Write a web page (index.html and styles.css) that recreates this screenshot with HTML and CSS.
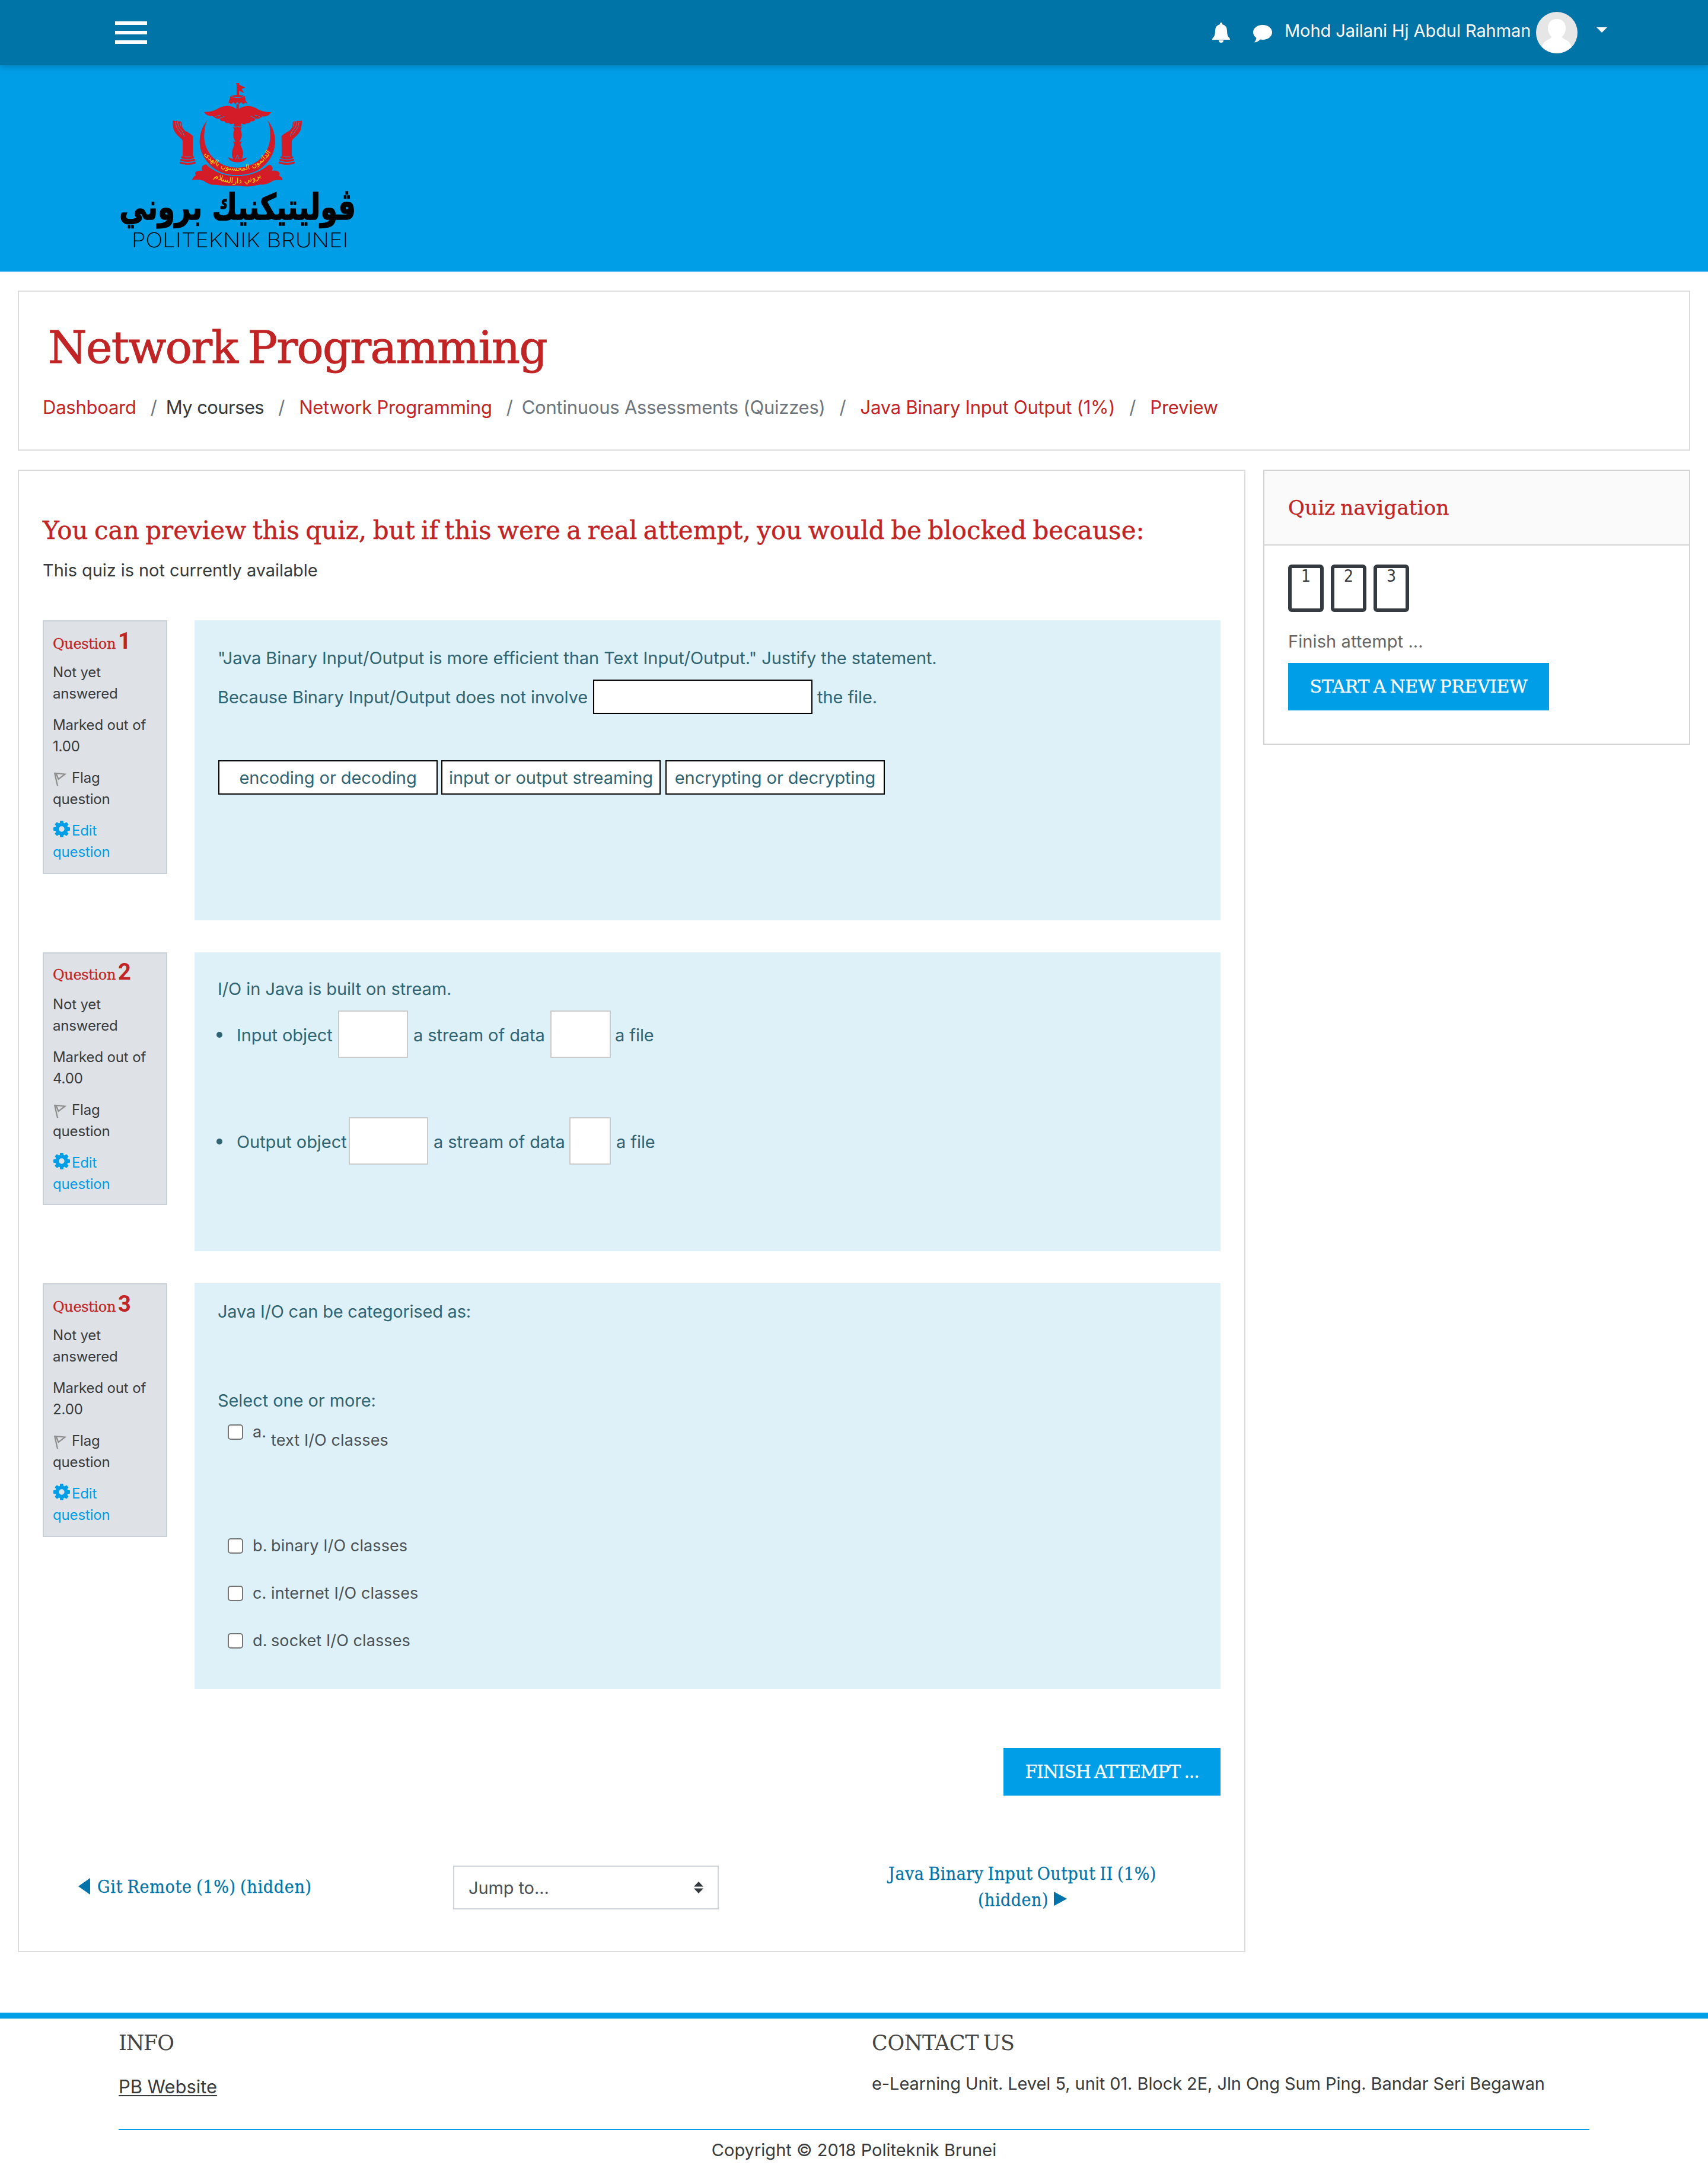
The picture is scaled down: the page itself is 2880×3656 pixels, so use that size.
FILE: index.html
```
<!DOCTYPE html>
<html lang="en">
<head>
<meta charset="utf-8">
<title>Java Binary Input Output (1%)</title>
<link rel="stylesheet" href="styles.css">
</head>
<body>
<svg class="defs" width="0" height="0" aria-hidden="true">
  <symbol id="flag" viewBox="0 0 24 26"><path d="M3 2l5 22M5.500 3l15 1.500-11 8.500z" fill="none" stroke="#8c8c8c" stroke-width="2.200"/></symbol>
  <symbol id="gear" viewBox="0 0 1536 1536"><path fill="#009ee7" d="M1024 768q0-106-75-181t-181-75-181 75-75 181 75 181 181 75 181-75 75-181zm512-109v222q0 12-8 23t-20 13l-185 28q-19 54-39 91 35 50 107 138 10 12 10 25t-9 23q-27 37-99 108t-94 71q-12 0-26-9l-138-108q-44 23-91 38-16 136-29 186-7 28-36 28h-222q-14 0-24.500-8.500t-11.500-21.500l-28-184q-49-16-90-37l-141 107q-10 9-25 9-14 0-25-11-126-114-165-168-7-10-7-23 0-12 8-23 15-21 51-66.500t54-70.500q-27-50-41-99l-183-27q-13-2-21-12.500t-8-23.500v-222q0-12 8-23t19-13l186-28q14-46 39-92-40-57-107-138-10-12-10-24 0-10 9-23 26-36 98.500-107.500t94.500-71.500q13 0 26 10l138 107q44-23 91-38 16-136 29-186 7-28 36-28h222q14 0 24.500 8.500t11.500 21.500l28 184q49 16 90 37l142-107q9-9 24-9 13 0 25 10 129 119 165 170 7 8 7 22 0 12-8 23-15 21-51 66.500t-54 70.500q26 50 41 98l183 28q13 2 21 12.500t8 23.500z"/></symbol>
  <symbol id="hand" viewBox="385 600 130 240">
    <path d="M393 612q4-4 9 0l9 0q5-4 9 2l6 0q6-4 9 2l4 4q0 14 3 24l14 18q26 12 40 26l-1 104h-51v-78q0-8-10-14-30-26-36-46-5-20-5-42z" fill="#d31c27"/>
    <path d="M407 616l6 28 26 38M418 616l6 26 20 24 8 24M431 616l4 24" fill="none" stroke="#58a" stroke-width="3"/>
    <path d="M441 796q28 10 56 0M437 809q32 10 65 0M434 823q36 12 71 0" fill="none" stroke="#d31c27" stroke-width="10" stroke-linecap="round"/>
  </symbol>
</svg>

<header class="topbar">
  <button class="menu" aria-label="Side panel"><i></i><i></i><i></i></button>
  <div class="user">
    <svg class="bell" viewBox="0 0 30 34"><path fill="#fff" d="M15 0q2 0 2 3 8 2 8 11 0 9 4 12 1 1 1 3H0q0-2 1-3 4-3 4-12 0-9 8-11 0-3 2-3zM11 30h8q0 4-4 4t-4-4z"/></svg>
    <svg class="chat" viewBox="0 0 32 30"><path fill="#fff" d="M16 0c9 0 16 5.500 16 12.500S25 25 16 25q-2 0-4-.4Q8 29 2 29.500q3-3 3.500-7.500Q0 18 0 12.500C0 5.500 7 0 16 0z"/></svg>
    <span class="user-name">Mohd Jailani Hj Abdul Rahman</span>
    <svg class="avatar" viewBox="0 0 70 70"><defs><clipPath id="round"><circle cx="35" cy="35" r="35"/></clipPath></defs><g clip-path="url(#round)"><path fill="#e6e6e6" d="M0 0h70v70H0z"/><path fill="#fff" d="M35 12c9 0 15 6 15 15 0 7-3 12-6 15 0 5 14 4 16 18v12H10V60c2-14 16-13 16-18-3-3-6-8-6-15 0-9 6-15 15-15z"/></g></svg>
    <svg class="caret" viewBox="0 0 18 9"><path fill="#fff" d="M0 0h18L9 9z"/></svg>
  </div>
</header>

<div class="banner">
  <svg class="logo" viewBox="120 414 1206 852" role="img" aria-label="Politeknik Brunei">
    <g fill="#d31c27">
      <path d="M716 420h14v9l32 14-20 7 13 21-26-12v28h-12v-60h-3z"/>
      <path d="M686 486q36-12 72 0l5 24 9 16-12-6-10 8-11-11-10 10-9-11-10 11-10-10-11 11-9-9-6 6z"/>
      <path d="M716 527h12v24q38-26 84-6 34 24 80 22-14 26-46 22-8 14-34 12-4 16-22 12-6 12-26 12-4 8-22 0l-4 9q14 2-4 8-12-8-24 0-16-6-4-8l-4-9q-18 6-22-2-20 2-26-10-20 2-24-12-24 0-32-13-32 2-46-22 46 2 80-22 46-20 84 7z"/>
      <path d="M696 642q14 6 25-2 11 8 25 2-10 8-8 16 10 28 0 46-4 8-8 12l16 0q-12 8-8 20 16 34 10 52-2 14-10 18l32-10q-14 26-49 25-35 1-49-25l32 10q-8-4-10-18-4-20 10-52 4-12-8-20l16 0q-4-4-8-12-8-18 0-46 2-8-8-16z"/>
      <path d="M569 608A191 175 0 1 0 871 606Q888 636 886 676A167 158 0 1 1 554 670Q554 636 569 608z"/>
      <path d="M491 912q6-20 20-24-12-20 14-24 10-2 18 0-8-22 10-30 16-6 24 2 58 54 144 54t146-52q24-12 32 12 0 8-4 14 28-6 38 10 4 8-2 16 18 4 18 22-22-6-48 2-32 22-66 20-56 16-114 5-56 4-110-4-28 4-60-20-34-12-60-3z"/>
    </g>
    <g fill="none" stroke="#009ee7" stroke-width="3">
      <path d="M595 600q20-16 40-18M622 608q14-14 34-20M848 600q-20-16-40-18M822 608q-14-14-34-20M690 488q32 12 64 0M712 806l9-22 9 22"/>
      <path d="M566 832q60 56 154 56 92 0 160-58" stroke-width="5"/>
    </g>
    <use href="#hand" x="385" y="600" width="130" height="240"/>
    <use href="#hand" x="385" y="600" width="130" height="240" transform="matrix(-1 0 0 1 1440 0)"/>
    <path id="arc-upper" d="M520 720Q580 862 722 864 862 862 922 710" fill="none"/>
    <path id="arc-lower" d="M524 850Q620 928 722 928 822 928 916 842" fill="none"/>
    <g class="motto">
      <text class="motto-upper"><textPath href="#arc-upper" startOffset="50%">الدائمون المحسنون بالهدى</textPath></text>
      <text><textPath href="#arc-lower" startOffset="50%">بروني دارالسلام</textPath></text>
    </g>
    <text class="logo-jawi" x="722" y="1110" textLength="1196" lengthAdjust="spacingAndGlyphs">ڤوليتيكنيك بروني</text>
    <text class="logo-latin" x="186" y="1252" textLength="1096" lengthAdjust="spacingAndGlyphs">POLITEKNIK BRUNEI</text>
  </svg>
</div>

<section class="page-header">
  <h1>Network Programming</h1>
  <nav class="crumbs">
    <a>Dashboard</a><i>/</i><span class="dark tight">My courses</span><i class="wide">/</i><a>Network Programming</a><i>/</i><span>Continuous Assessments (Quizzes)</span><i class="wide">/</i><a>Java Binary Input Output (1%)</a><i class="wide">/</i><a>Preview</a>
  </nav>
</section>

<div class="columns">
  <main class="card main">
    <h3 class="notice">You can preview this quiz, but if this were a real attempt, you would be blocked because:</h3>
    <p class="reason">This quiz is not currently available</p>

    <section class="question q1">
      <aside class="info">
        <h4><span>Question</span><b>1</b></h4>
        <p>Not yet<br>answered</p>
        <p>Marked out of<br>1.00</p>
        <p><svg class="ico flag"><use href="#flag"/></svg>Flag<br>question</p>
        <p class="edit"><svg class="ico gear"><use href="#gear"/></svg>Edit<br>question</p>
      </aside>
      <div class="content">
        <p>"Java Binary Input/Output is more efficient than Text Input/Output." Justify the statement.</p>
        <div class="drop-line"><span class="lead">Because Binary Input/Output does not involve</span><span class="slot"></span><span>the file.</span></div>
        <div class="choices"><span class="slot">encoding or decoding</span><span class="slot">input or output streaming</span><span class="slot last">encrypting or decrypting</span></div>
      </div>
    </section>

    <section class="question q2">
      <aside class="info">
        <h4><span>Question</span><b>2</b></h4>
        <p>Not yet<br>answered</p>
        <p>Marked out of<br>4.00</p>
        <p><svg class="ico flag"><use href="#flag"/></svg>Flag<br>question</p>
        <p class="edit"><svg class="ico gear"><use href="#gear"/></svg>Edit<br>question</p>
      </aside>
      <div class="content">
        <p>I/O in Java is built on stream.</p>
        <ul>
          <li><span class="obj">Input object</span><span class="blank b1"></span><span class="mid">a stream of data</span><span class="blank b2"></span><span>a file</span></li>
          <li><span class="obj out">Output object</span><span class="blank b3"></span><span class="mid short">a stream of data</span><span class="blank b4"></span><span>a file</span></li>
        </ul>
      </div>
    </section>

    <section class="question q3">
      <aside class="info">
        <h4><span>Question</span><b>3</b></h4>
        <p>Not yet<br>answered</p>
        <p>Marked out of<br>2.00</p>
        <p><svg class="ico flag"><use href="#flag"/></svg>Flag<br>question</p>
        <p class="edit"><svg class="ico gear"><use href="#gear"/></svg>Edit<br>question</p>
      </aside>
      <div class="content">
        <p class="stem">Java I/O can be categorised as:</p>
        <p class="prompt">Select one or more:</p>
        <div class="option first"><span class="check"></span><span class="letter">a.</span><span class="answer">text I/O classes</span></div>
        <div class="option"><span class="check"></span><span class="letter">b.</span><span>binary I/O classes</span></div>
        <div class="option"><span class="check"></span><span class="letter">c.</span><span>internet I/O classes</span></div>
        <div class="option"><span class="check"></span><span class="letter">d.</span><span>socket I/O classes</span></div>
      </div>
    </section>

    <div class="submit"><button class="btn finish">FINISH ATTEMPT ...</button></div>

    <nav class="activity-nav">
      <a class="prev"><svg viewBox="0 0 20 28"><path d="M20 0v28L0 14z"/></svg>Git Remote (1%) (hidden)</a>
      <div class="jump">Jump to...<svg viewBox="0 0 16 20"><path d="M8 0l8 8.500H0zM8 20l8-8.500H0z"/></svg></div>
      <a class="next">Java Binary Input Output II (1%)<br>(hidden)<svg viewBox="0 0 22 24"><path d="M0 0v24l22-12z"/></svg></a>
    </nav>
  </main>

  <aside class="card side">
    <h5>Quiz navigation</h5>
    <div class="side-body">
      <div class="numbers"><span>1</span><span>2</span><span>3</span></div>
      <p>Finish attempt ...</p>
      <button class="btn restart">START A NEW PREVIEW</button>
    </div>
  </aside>
</div>

<footer>
  <div class="foot-cols">
    <div><h6>INFO</h6><a class="site">PB Website</a></div>
    <div><h6 class="contact">CONTACT US</h6><p>e-Learning Unit. Level 5, unit 01. Block 2E, Jln Ong Sum Ping. Bandar Seri Begawan</p></div>
  </div>
  <p class="copy">Copyright © 2018 Politeknik Brunei</p>
</footer>
</body>
</html>
```
FILE: styles.css
```
* { box-sizing: border-box; }
body { margin: 0; width: 2880px; height: 3656px; overflow: hidden; background: #fff; color: #373a3c; font: 29px/44px Inter, sans-serif; letter-spacing: -0.07px; }
h1, h3, h4, h5, h6, p, ul { margin: 0; padding: 0; font-weight: 400; }
button { border: 0; padding: 0; background: none; font: inherit; }
i { font-style: normal; }
.defs { display: block; height: 0; }

.topbar { position: relative; display: flex; justify-content: space-between; height: 110px; padding: 0 170px 0 194px; background: #0073a7; box-shadow: 0 2px 10px rgba(0, 60, 90, .35); }
.menu { display: flex; flex-direction: column; gap: 10px; margin-top: 36px; }
.menu i { width: 54px; height: 6px; background: #fff; }
.user { display: flex; align-items: center; color: #fff; }
.bell { width: 30px; height: 34px; }
.chat { width: 32px; height: 30px; margin: 4px 21px 0 39px; }
.user-name { width: 424px; padding-bottom: 7px; letter-spacing: -0.08px; white-space: nowrap; }
.avatar { width: 70px; height: 70px; margin-right: 32px; }
.caret { width: 18px; height: 9px; margin-bottom: 9px; }

.banner { height: 348px; padding: 28px 200px; background: #009ee7; }
.logo { display: block; width: 402px; height: 284px; overflow: visible; }
.motto { fill: #ffd400; font: 38px "DejaVu Sans", sans-serif; text-anchor: middle; letter-spacing: 0; }
.motto-upper { font-size: 36px; }
.logo-jawi { font: bold 180px "DejaVu Sans", sans-serif; text-anchor: middle; letter-spacing: 0; stroke: #000; stroke-width: 5px; }
.logo-latin { font: 200 103px Inter, sans-serif; letter-spacing: 0; }

.page-header { height: 270px; margin: 32px 30px; padding: 49px 40px 0; border: 2px solid #ddd; }
h1 { padding-left: 9px; color: #c12424; font: 75px/90px "DejaVu Serif", serif; letter-spacing: -1.65px; word-spacing: -5px; -webkit-text-stroke: 1px #c12424; }
.crumbs { display: flex; margin-top: 33px; color: #6c757d; font-size: 31px; line-height: 46px; letter-spacing: -0.24px; white-space: nowrap; }
.crumbs a { color: #c12424; }
.crumbs .dark { color: #373a3c; }
.crumbs .tight { letter-spacing: -0.6px; }
.crumbs i { width: 11px; margin: 0 15px 0 24px; }
.crumbs .wide { margin-right: 24px; }

.columns { display: flex; align-items: flex-start; gap: 30px; padding: 0 30px; }
.card { border: 2px solid #ddd; }
.main { width: 2070px; height: 2500px; padding: 71px 40px 0; }
.notice { color: #c12424; font: 42px/60px "DejaVu Serif", serif; letter-spacing: .05px; word-spacing: -3px; white-space: nowrap; -webkit-text-stroke: .5px #c12424; }
.reason { margin: 15px 0 62px; }

.question { display: flex; gap: 46px; align-items: flex-start; margin-bottom: 54px; }
.info { width: 210px; height: 428px; padding: 11px 15px 0; border: 2px solid #cad0d7; background: #dee1e6; font-size: 24px; line-height: 36px; letter-spacing: -0.15px; }
.info h4 { display: flex; align-items: baseline; gap: 4px; height: 44px; margin-bottom: 13px; color: #c12424; }
.info h4 span { font: 24px/24px "DejaVu Serif", serif; letter-spacing: -0.35px; -webkit-text-stroke: .3px #c12424; }
.info h4 b { font: 700 38px/44px Roboto, sans-serif; }
.info p { margin-bottom: 17px; }
.info .edit { color: #009ee7; }
.ico { display: inline-block; width: 28px; height: 28px; margin: 0 3px 0 1px; vertical-align: -3px; }
.flag { width: 24px; height: 26px; margin: 0 8px 0 0; vertical-align: -7px; }
.content { width: 1730px; padding: 42px 40px 0 39px; background: #def0f8; color: #2f6473; white-space: nowrap; }
.q1 .content { height: 506px; }
.q2 .content { height: 504px; padding-top: 40px; }
.q3 .content { height: 684px; padding-top: 26px; }
.q2 .info { height: 426px; padding-top: 9px; }
.q2 .info h4 { margin-bottom: 15px; }

.drop-line { display: flex; margin-top: 14px; line-height: 59px; }
.drop-line .lead { width: 633px; }
.slot { width: 370px; height: 58px; border: 2px solid #000; background: #fff; line-height: 55px; text-align: center; }
.drop-line .slot { margin-right: 8px; }
.choices { display: flex; gap: 6px; margin: 77px 0 0 1px; }
.choices .last { margin-left: 2px; }

.q2 ul { display: flex; flex-direction: column; gap: 100px; margin-top: 14px; list-style: none; }
.q2 li { display: flex; align-items: center; height: 80px; line-height: 80px; }
.q2 li::before { content: ""; width: 10px; height: 10px; margin: 2px 24px 0 -2px; border-radius: 50%; background: #2f6473; }
.q2 li span { padding-top: 3px; }
.obj { width: 171px; }
.out { width: 189px; }
.mid { width: 231px; }
.short { width: 229px; }
.blank { height: 80px; margin-right: 9px; border: 2px solid #ccc; background: #fff; }
.b1 { width: 118px; }
.b2 { width: 102px; margin-right: 7px; }
.b3 { width: 134px; }
.b4 { width: 70px; }

.stem { letter-spacing: -0.22px; }
.prompt { margin: 106px 0 8px; }
.option { display: flex; align-items: flex-start; height: 44px; margin-bottom: 36px; padding-left: 17px; color: #495057; font-size: 27px; line-height: 46px; letter-spacing: .1px; }
.option.first { margin-bottom: 148px; }
.check { width: 26px; height: 26px; margin: 10px 16px 0 0; border: 2px solid #767676; border-radius: 5px; background: #fff; }
.letter { width: 31px; }
.answer { padding-top: 14px; }

.btn { display: block; height: 80px; background: #009ee7; color: #fff; font: 30px/80px "DejaVu Serif", serif; text-align: center; white-space: nowrap; -webkit-text-stroke: .3px #fff; }
.submit { display: flex; justify-content: flex-end; margin-top: 100px; }
.finish { width: 366px; letter-spacing: -1.2px; word-spacing: -2px; }
.restart { width: 440px; margin-top: 14px; letter-spacing: -.45px; word-spacing: -2.5px; }

.activity-nav { display: flex; align-items: center; height: 88px; margin-top: 110px; color: #0073a8; font: 30px/44px "DejaVu Serif Condensed", "DejaVu Serif", serif; word-spacing: -2px; -webkit-text-stroke: .3px #0073a8; }
.activity-nav path { fill: currentColor; }
.prev { width: 692px; padding-left: 60px; letter-spacing: .72px; }
.prev svg { width: 20px; height: 28px; margin-right: 12px; vertical-align: -3px; }
.jump { display: flex; align-items: center; justify-content: space-between; width: 448px; height: 74px; margin-top: 2px; padding: 0 24px; border: 2px solid #ced4da; color: #495057; font: 29px/71px Inter, sans-serif; letter-spacing: -0.1px; word-spacing: 0; -webkit-text-stroke: 0; }
.jump svg { width: 16px; height: 20px; color: #343a40; }
.next { width: 480px; margin-left: 272px; letter-spacing: .5px; text-align: center; white-space: nowrap; }
.next svg { width: 22px; height: 24px; margin-left: 9px; }

.side { width: 720px; height: 464px; border-color: #d4d4d4; }
h5 { height: 126px; padding: 38px 40px 0; border-bottom: 2px solid #d4d4d4; background: #fafafa; color: #c12424; font: 34px/48px "DejaVu Serif", serif; letter-spacing: .2px; word-spacing: -2px; -webkit-text-stroke: .4px #c12424; }
.side-body { padding: 32px 40px 0; }
.side-body p { margin-top: 28px; color: #666; letter-spacing: .1px; }
.numbers { display: flex; gap: 12px; }
.numbers span { width: 60px; height: 80px; border: 6px solid #343a40; border-radius: 6px; color: #343a40; font: 28px/28px "DejaVu Sans Condensed", "DejaVu Sans", sans-serif; text-align: center; }

footer { margin-top: 102px; border-top: 10px solid #009ee7; }
.foot-cols { display: grid; grid-template-columns: 1270px 1fr; height: 188px; margin: 0 200px; padding-top: 16px; border-bottom: 2px solid #009ee7; }
h6 { color: #444; font: 35px/50px "DejaVu Serif", serif; letter-spacing: -1.2px; }
.contact { letter-spacing: -.4px; word-spacing: -3px; }
.site { display: inline-block; margin-top: 26px; font-size: 31px; line-height: 46px; text-decoration: underline; text-underline-offset: 3px; text-decoration-thickness: 2px; }
.foot-cols p { margin-top: 22px; }
.copy { margin-top: 12px; text-align: center; letter-spacing: .02px; }
```
